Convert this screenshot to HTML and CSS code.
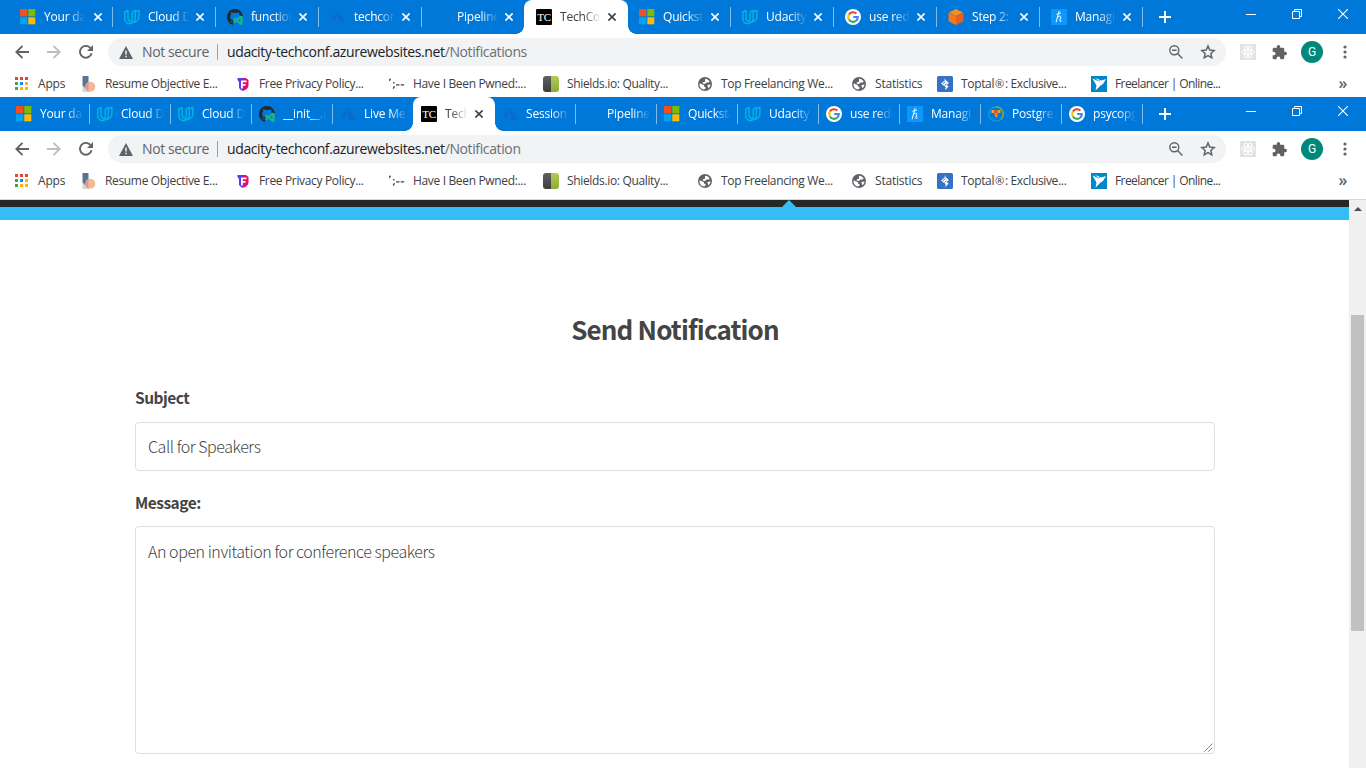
FILE: index.html
```html
<!DOCTYPE html>
<html lang="en">
<head>
<meta charset="utf-8">
<title>TechConf - Send Notification</title>
<link rel="stylesheet" href="styles.css">
</head>
<body>
<svg class="defs" aria-hidden="true">
  <symbol id="ms" viewBox="0 0 16 16"><path fill="#f25022" d="M0 0h7.300v7.300H0z"/><path fill="#7fba00" d="M8.300 0h7v7.300h-7z"/><path fill="#00a4ef" d="M0 8.300h7.300v7H0z"/><path fill="#ffb900" d="M8.300 8.300h7v7h-7z"/></symbol>
  <symbol id="ud" viewBox="0 0 16 16"><g fill="none" stroke="#02b3e4" stroke-width="1.500" stroke-linejoin="round"><path d="M4 1.400.8 3v6.300c0 3.400 2.300 5.400 4.600 5.400 1.300 0 2.200-.5 3.100-1.200C5.800 13 4 11.300 4 8.500z"/><path d="M8.200 3.200 11.200 1.500v8c0 2-1 3.400-2.700 4 3.700-.3 6.400-2.400 6.400-5.900V1.200L11.800 2.800M8.200 3.200v7.200c0 1-.6 1.700-1.800 1.700"/></g></symbol>
  <symbol id="gh" viewBox="0 0 16 16"><path fill="#24292e" d="M8 0C3.600 0 0 3.600 0 8s2.700 7.300 6 7.800v-2.500c-2 .4-2.700-.8-3.400-1.800l1.600.5c.6 1 1.400.9 2 .7.100-.5.300-.9.600-1.100C4.700 11.300 3.200 10.300 3.200 7.700c0-1 .4-1.700.9-2.300-.2-.6-.2-1.400.1-2.200.9 0 1.700.5 2.300.9 1-.3 2.300-.3 3.300 0 .7-.5 1.500-.9 2.200-.9.300.8.300 1.500.1 2.200.5.600.8 1.300.8 2.200h2.900C15.700 3.200 12.300 0 8 0z"/><path fill="#1bb58f" d="m13.500 6.500 2.200 1v7.700l-2.200.8-4-3.300-2 1.500-.8-.5V9l.8-.5 2 1.500zM13.300 9.500l-2.400 1.900 2.400 1.900zM8 10.500v1.800l.9-.9z"/></symbol>
  <symbol id="az" viewBox="0 0 16 16"><path fill="#0a6cc8" d="M8.300 2.500 4.500 5.800 1 12.500h3.200zM8.800 3.400 7 8.300l3.500 4.200-6.500 1h11.200z"/></symbol>
  <symbol id="go" viewBox="0 0 16 16"><circle cx="8" cy="8" r="8" fill="#fff"/><g fill="none" stroke-width="2.100"><path stroke="#ea4335" d="M3.900 5.500A4.800 4.800 0 0 1 11.400 4.600"/><path stroke="#fbbc05" d="M3.900 5.500a4.800 4.800 0 0 0 0 5"/><path stroke="#34a853" d="M3.900 10.500a4.800 4.800 0 0 0 7.200 1.200"/><path stroke="#4285f4" d="M8.200 8h4.600a4.700 4.700 0 0 1-1.700 3.700"/></g></symbol>
  <symbol id="cube" viewBox="0 0 16 16"><path fill="#fb8c1e" d="M8 0 15 3.500 8 7 1 3.500z"/><path fill="#f9771b" d="M.5 3.700 8 7.300V16L.5 12.300z"/><path fill="#e8601c" d="M15.500 3.700 8 7.300V16l7.500-3.700z"/></symbol>
  <symbol id="hh" viewBox="0 0 16 16"><path fill="#0c97fc" d="M0 0h16v16H0z"/><g fill="none" stroke="#fff" stroke-linecap="round"><path d="M8 2.500 5.200 12.800M6.300 8.700C7.500 7 9.900 6.300 9.700 8.200L8.900 11.700c-.2 1 .5 1.200 1.300.3M5.900 5.200l3.700-1.200"/></g></symbol>
  <symbol id="pg" viewBox="0 0 16 16"><circle cx="8" cy="8" r="7.200" fill="none" stroke="#1aa0c8" stroke-width="1.200"/><path d="M8 .8a7.200 7.200 0 0 1 5 12.400" fill="none" stroke="#75b843" stroke-width="1.300"/><path fill="#f7a51c" d="M3.500 4h3v3h-3zM9.500 4h3v3h-3z"/><path fill="#e94b35" d="M6.500 4h3v3h-3z"/><path fill="#f58220" d="M6.500 7h3v5l-3-2z"/></symbol>
  <symbol id="x" viewBox="0 0 8 8"><path d="m.4.400 7.200 7.200M7.600.4.400 7.600" stroke="currentColor" stroke-width="1.600" fill="none"/></symbol>
  <symbol id="plus" viewBox="0 0 12 12"><path d="M6 0v12M0 6h12" stroke="currentColor" stroke-width="2"/></symbol>
  <symbol id="min" viewBox="0 0 10 10"><path d="M0 5.500h10" stroke="#fff"/></symbol>
  <symbol id="restore" viewBox="0 0 10 10"><path d="M.5 2.500h7v7h-7zM2.500 2.500v-2h7v7h-2" fill="none" stroke="#fff"/></symbol>
  <symbol id="close" viewBox="0 0 10 10"><path d="m0 0 10 10M10 0 0 10" stroke="#fff" stroke-width="1.100"/></symbol>
  <symbol id="back" viewBox="0 0 14 14"><path d="M14 7H1.500M7.500.8 1.300 7l6.200 6.200" fill="none" stroke="currentColor" stroke-width="1.900"/></symbol>
  <symbol id="reload" viewBox="0 0 14 14"><path d="M12.600 8.300A5.900 5.900 0 1 1 11.300 2.900" fill="none" stroke="#5f6368" stroke-width="1.900"/><path fill="#5f6368" d="M14 0v6H8z"/></symbol>
  <symbol id="warn" viewBox="0 0 14 13"><path fill="#5f6368" d="M7 0 14 13H0z"/><path stroke="#f1f3f4" stroke-width="1.500" d="M7 4.500v4M7 9.800v1.500"/></symbol>
  <symbol id="lens" viewBox="0 0 14 14"><g fill="none" stroke="#5f6368" stroke-width="1.400"><circle cx="5.300" cy="5.300" r="4.500"/><path d="m8.600 8.600 4.800 4.800M3 5.300h4.600"/></g></symbol>
  <symbol id="star" viewBox="0 0 14 14"><path fill="none" stroke="#5f6368" stroke-width="1.300" d="m7 1.700 1.500 3.600 3.900.4-2.900 2.600.8 3.800L7 10.100l-3.300 2 .8-3.800-2.900-2.600 3.900-.4z"/></symbol>
  <symbol id="react" viewBox="0 0 16 16"><path fill="#e2e2e2" d="M0 0h16v16H0z"/><g fill="none" stroke="#fff"><ellipse cx="8" cy="8" rx="6.300" ry="2.500"/><ellipse cx="8" cy="8" rx="6.300" ry="2.500" transform="rotate(60 8 8)"/><ellipse cx="8" cy="8" rx="6.300" ry="2.500" transform="rotate(120 8 8)"/></g><circle cx="8" cy="8" r="1.200" fill="#fff"/></symbol>
  <symbol id="puzzle" viewBox="1 1 22 22"><path fill="#5f6368" d="M20.500 11H19V7a2 2 0 0 0-2-2h-4V3.500a2.500 2.500 0 0 0-5 0V5H4a2 2 0 0 0-2 2v3.800h1.500a2.700 2.700 0 0 1 0 5.400H2V20c0 1.100.9 2 2 2h3.800v-1.500a2.700 2.700 0 0 1 5.400 0V22H17a2 2 0 0 0 2-2v-4h1.500a2.500 2.500 0 0 0 0-5z"/></symbol>
  <symbol id="dots" viewBox="0 0 4 14"><g fill="#5f6368"><circle cx="2" cy="2" r="1.600"/><circle cx="2" cy="7" r="1.600"/><circle cx="2" cy="12" r="1.600"/></g></symbol>
  <symbol id="apps" viewBox="0 0 16 16"><path fill="#ea4335" d="M1 1h3v3H1zM6 1h3v3H6zM11 1h3v3h-3z"/><path fill="#34a853" d="M1 6h3v3H1zM1 11h3v3H1z"/><path fill="#1a84f0" d="M6 6h3v3H6z"/><path fill="#f9b30b" d="M11 6h3v3h-3zM6 11h3v3H6zM11 11h3v3h-3z"/></symbol>
  <symbol id="resume" viewBox="0 0 16 16"><path fill="#587592" d="M1.500 0h6v16l-6-6z"/><path fill="#d5d4d4" d="M1.500 9v7h6z"/><circle cx="9.300" cy="10.700" r="5" fill="#f3b799"/><path fill="#d99c88" d="M7.500 6v9.400C5.600 15 4.300 13 4.300 10.700S5.600 6.700 7.500 6z"/></symbol>
  <symbol id="fpp" viewBox="0 0 16 16"><path fill="#5d37f5" d="M2.500 2H9v12.500H6.500L4 12V6L2.500 4z"/><path fill="#e80e67" d="M8 2h3l2.500 2v5c0 3-2.500 5.500-6 5.500z"/><path fill="#fff" d="M6 4.500h5.500v1.800H7.800V8H10.500v1.700H7.800V12.500H6z"/></symbol>
  <symbol id="pwn" viewBox="0 0 18 16"><path d="M1.800 2.200q-1.500 1-.7 2.300M5.400 5.800v1.500M5.700 10.400q.3 1.400-1 2.800M8 9h3.800M13.200 9H17" fill="none" stroke="#3c4043" stroke-width="1.500"/></symbol>
  <symbol id="shield" viewBox="0 0 16 16"><defs><linearGradient id="sg" x2="0" y2="1"><stop stop-color="#606060"/><stop offset="1" stop-color="#3e3e3e"/></linearGradient><linearGradient id="sl" x2="0" y2="1"><stop stop-color="#b0ce55"/><stop offset="1" stop-color="#8aab35"/></linearGradient></defs><path fill="url(#sg)" d="M8 0H3Q0 0 0 3v10q0 3 3 3h5z"/><path fill="url(#sl)" d="M8 0h5q3 0 3 3v10q0 3-3 3H8z"/></symbol>
  <symbol id="globe" viewBox="0 0 16 16"><circle cx="8" cy="8" r="7" fill="#5f6368"/><path fill="#fff" d="M2.500 7.500C4 8 6 8.300 7 9.300l.2 1.500 1.300.2v1.500l-1.300 1C4.200 13.400 2.300 11 2.500 7.500zM8 2.700c2 0 3.800 1.100 4.700 2.800l-1 1H9.500L8 8 5.500 7.500 6 6.300l2-.5zM13.500 8.500c-.2 1.600-1 2.900-2.100 3.800L10.500 10V9z"/></symbol>
  <symbol id="toptal" viewBox="0 0 16 16"><rect width="16" height="16" rx="1.500" fill="#3372c4"/><path fill="#fff" d="m6.700 2 5.100 5-2 2 1.800 1.600-3.500 3.600.6-3L4.200 7.600l2.300-2 1.500-1.300z"/><path d="m6 7.700 2.200-1.900M7.600 9.700l2-2" stroke="#3372c4"/></symbol>
  <symbol id="fl" viewBox="0 0 16 16"><path fill="#0087ca" d="M0 0h16v16H0z"/><path fill="#fff" d="m1.500 2.500 6.500 3L9.500 4l.8.500L15 3l-3 5-3 2-4.500 4.500 1-5zM4 2l4 1.500.7.500L7.800 5z"/></symbol>
</svg>

<header class="browser">
  <div class="strip wide">
    <div class="tab"><svg class="ico"><use href="#ms"/></svg><span class="title">Your das</span><svg class="x"><use href="#x"/></svg></div>
    <div class="tab"><svg class="ico"><use href="#ud"/></svg><span class="title">Cloud D</span><svg class="x"><use href="#x"/></svg></div>
    <div class="tab"><svg class="ico"><use href="#gh"/></svg><span class="title">function</span><svg class="x"><use href="#x"/></svg></div>
    <div class="tab"><svg class="ico"><use href="#az"/></svg><span class="title">techcon</span><svg class="x"><use href="#x"/></svg></div>
    <div class="tab plain"><span class="ico"></span><span class="title">Pipeline</span><svg class="x"><use href="#x"/></svg></div>
    <div class="tab active"><span class="ico tc">TC</span><span class="title">TechCo</span><svg class="x"><use href="#x"/></svg></div>
    <div class="tab"><svg class="ico"><use href="#ms"/></svg><span class="title">Quickst</span><svg class="x"><use href="#x"/></svg></div>
    <div class="tab"><svg class="ico"><use href="#ud"/></svg><span class="title">Udacity</span><svg class="x"><use href="#x"/></svg></div>
    <div class="tab"><svg class="ico"><use href="#go"/></svg><span class="title">use red</span><svg class="x"><use href="#x"/></svg></div>
    <div class="tab"><svg class="ico"><use href="#cube"/></svg><span class="title">Step 2:</span><svg class="x"><use href="#x"/></svg></div>
    <div class="tab"><svg class="ico"><use href="#hh"/></svg><span class="title">Managi</span><svg class="x"><use href="#x"/></svg></div>
    <svg class="plus"><use href="#plus"/></svg>
    <div class="controls"><svg><use href="#min"/></svg><svg><use href="#restore"/></svg><svg><use href="#close"/></svg></div>
  </div>
  <div class="toolbar">
    <div class="nav"><svg><use href="#back"/></svg><svg class="forward"><use href="#back"/></svg><svg><use href="#reload"/></svg></div>
    <div class="omnibox"><svg class="warn"><use href="#warn"/></svg><span class="secure">Not secure</span><span class="url">udacity-techconf.azurewebsites.net<span class="path">/Notifications</span></span><svg class="lens"><use href="#lens"/></svg><svg class="star"><use href="#star"/></svg></div>
    <svg class="react"><use href="#react"/></svg><svg class="puzzle"><use href="#puzzle"/></svg><span class="avatar">G</span><svg class="dots"><use href="#dots"/></svg>
  </div>
  <div class="bookmarks">
    <span class="mark apps"><svg><use href="#apps"/></svg>Apps</span>
    <span class="mark"><svg><use href="#resume"/></svg>Resume Objective E...</span>
    <span class="mark fpp"><svg><use href="#fpp"/></svg>Free Privacy Policy...</span>
    <span class="mark"><svg><use href="#pwn"/></svg>Have I Been Pwned:...</span>
    <span class="mark"><svg><use href="#shield"/></svg>Shields.io: Quality...</span>
    <span class="mark"><svg><use href="#globe"/></svg>Top Freelancing We...</span>
    <span class="mark stats"><svg><use href="#globe"/></svg>Statistics</span>
    <span class="mark"><svg><use href="#toptal"/></svg>Toptal<span class="reg">®</span>: Exclusive...</span>
    <span class="mark last"><svg><use href="#fl"/></svg>Freelancer | Online...</span>
    <span class="more">»</span>
  </div>
</header>

<header class="browser second">
  <div class="strip narrow">
    <div class="tab"><svg class="ico"><use href="#ms"/></svg><span class="title">Your da</span></div>
    <div class="tab"><svg class="ico"><use href="#ud"/></svg><span class="title">Cloud D</span></div>
    <div class="tab"><svg class="ico"><use href="#ud"/></svg><span class="title">Cloud D</span></div>
    <div class="tab"><svg class="ico"><use href="#gh"/></svg><span class="title">__init__.p</span></div>
    <div class="tab plain"><svg class="ico"><use href="#az"/></svg><span class="title">Live Me</span></div>
    <div class="tab active"><span class="ico tc">TC</span><span class="title">Tech</span><svg class="x"><use href="#x"/></svg></div>
    <div class="tab"><svg class="ico"><use href="#az"/></svg><span class="title">Session</span></div>
    <div class="tab"><span class="ico"></span><span class="title">Pipeline</span></div>
    <div class="tab"><svg class="ico"><use href="#ms"/></svg><span class="title">Quicksta</span></div>
    <div class="tab"><svg class="ico"><use href="#ud"/></svg><span class="title">Udacity</span></div>
    <div class="tab"><svg class="ico"><use href="#go"/></svg><span class="title">use redi</span></div>
    <div class="tab"><svg class="ico"><use href="#hh"/></svg><span class="title">Managi</span></div>
    <div class="tab"><svg class="ico"><use href="#pg"/></svg><span class="title">Postgre</span></div>
    <div class="tab"><svg class="ico"><use href="#go"/></svg><span class="title">psycopg</span></div>
    <svg class="plus"><use href="#plus"/></svg>
    <div class="controls"><svg><use href="#min"/></svg><svg><use href="#restore"/></svg><svg><use href="#close"/></svg></div>
  </div>
  <div class="toolbar">
    <div class="nav"><svg><use href="#back"/></svg><svg class="forward"><use href="#back"/></svg><svg><use href="#reload"/></svg></div>
    <div class="omnibox"><svg class="warn"><use href="#warn"/></svg><span class="secure">Not secure</span><span class="url">udacity-techconf.azurewebsites.net<span class="path">/Notification</span></span><svg class="lens"><use href="#lens"/></svg><svg class="star"><use href="#star"/></svg></div>
    <svg class="react"><use href="#react"/></svg><svg class="puzzle"><use href="#puzzle"/></svg><span class="avatar">G</span><svg class="dots"><use href="#dots"/></svg>
  </div>
  <div class="bookmarks">
    <span class="mark apps"><svg><use href="#apps"/></svg>Apps</span>
    <span class="mark"><svg><use href="#resume"/></svg>Resume Objective E...</span>
    <span class="mark fpp"><svg><use href="#fpp"/></svg>Free Privacy Policy...</span>
    <span class="mark"><svg><use href="#pwn"/></svg>Have I Been Pwned:...</span>
    <span class="mark"><svg><use href="#shield"/></svg>Shields.io: Quality...</span>
    <span class="mark"><svg><use href="#globe"/></svg>Top Freelancing We...</span>
    <span class="mark stats"><svg><use href="#globe"/></svg>Statistics</span>
    <span class="mark"><svg><use href="#toptal"/></svg>Toptal<span class="reg">®</span>: Exclusive...</span>
    <span class="mark last"><svg><use href="#fl"/></svg>Freelancer | Online...</span>
    <span class="more">»</span>
  </div>
</header>

<div class="viewport">
  <main class="page">
    <div class="topbar"><svg class="notch" viewBox="0 0 14 7"><path fill="#36bcf7" d="M0 7 7 0l7 7z"/></svg></div>
    <div class="banner"></div>
    <form class="form">
      <h2>Send Notification</h2>
      <label>Subject</label>
      <div class="field">Call for Speakers</div>
      <label>Message:</label>
      <div class="field area">An open invitation for conference speakers<svg class="grip" viewBox="0 0 9 9"><path d="M.5 8.500l8-8M4.500 8.500l4-4" stroke="#444" stroke-dasharray="1.100 .3"/></svg></div>
    </form>
  </main>
  <div class="scroll"><svg viewBox="0 0 8 4"><path fill="#505050" d="M0 4 4 0l4 4z"/></svg><div class="thumb"></div></div>
</div>
</body>
</html>
```
FILE: styles.css
```css
* { box-sizing: border-box; }
html, body { height: 100%; overflow: hidden; }
body { margin: 0; width: 1366px; height: 768px; display: flex; flex-direction: column; background: #fff; font-family: "Open Sans", "Noto Sans", sans-serif; }
svg { display: block; flex: none; }
.defs { position: absolute; width: 0; height: 0; }

.browser { flex: none; height: 97px; background: #fff; }
.browser.second { height: 103px; border-bottom: 1px solid #d3dbd3; }
.strip { height: 34px; background: #0078d9; display: flex; padding-left: 10px; color: #fff; font-size: 12px; letter-spacing: -.2px; }
.tab { flex: none; height: 34px; display: flex; align-items: center; position: relative; }
.tab::after { content: ""; position: absolute; right: 0; top: 7px; width: 1px; height: 20px; background: #80bcec; }
.tab.active::after, .tab.plain::after { display: none; }
.wide .tab.plain:nth-child(5)::after { display: none; }
.ico { width: 16px; height: 16px; flex: none; }
.tc { background: #000; color: #fff; border-radius: 1px; font: 11px/16px "Liberation Serif", serif; text-align: center; letter-spacing: -.3px; }
.title { flex: none; overflow: hidden; white-space: nowrap; line-height: 20px; height: 20px; -webkit-mask-image: linear-gradient(to right, #000 calc(100% - 17px), transparent); mask-image: linear-gradient(to right, #000 calc(100% - 17px), transparent); }
.x { width: 8px; height: 8px; }
.wide .tab { width: 103px; padding-left: 11px; }
.wide .tab:first-child { padding-left: 10px; }
.wide .tab:first-child .title { margin-right: 9px; }
.wide .title { width: 41px; margin: 0 7px 0 8px; }
.narrow { padding-left: 9px; }
.narrow .tab { width: 81px; padding-left: 7px; }
.narrow .title { width: 43px; margin-left: 8px; }
.narrow .active .title { width: 23px; margin-right: 7px; }
.tab.active { background: #fff; color: #3c4043; border-radius: 8px 8px 0 0; }
.wide .tab.active { width: 104px; margin-left: -1px; padding-left: 12px; }
.narrow .tab.active { width: 82px; margin-left: -1px; padding-left: 8px; }
.tab.active::before { content: ""; position: absolute; left: -8px; right: -8px; bottom: 0; height: 8px; background: radial-gradient(circle at 0 0, transparent 7.5px, #fff 8px) left / 8px 8px no-repeat, radial-gradient(circle at 100% 0, transparent 7.5px, #fff 8px) right / 8px 8px no-repeat; }
.plus { width: 12px; height: 12px; margin: 11px 0 0 16px; }
.controls { margin-left: auto; display: flex; gap: 36px; padding: 9px 18px 0 0; }
.controls svg { width: 10px; height: 10px; }

.toolbar { height: 36px; display: flex; align-items: center; }
.nav { display: flex; gap: 18px; padding-left: 15px; width: 108px; color: #5f6368; }
.nav svg { width: 14px; height: 14px; }
.nav .forward { color: #bbbdbf; transform: scaleX(-1); }
.omnibox { width: 1118px; height: 28px; border-radius: 14px; background: #f1f3f4; display: flex; align-items: center; padding: 0 10px 0 11px; font-size: 14px; color: #202124; white-space: nowrap; }
.warn { width: 14px; height: 13px; }
.secure { color: #5f6368; width: 76px; height: 16px; line-height: 15px; margin-left: 9px; border-right: 1px solid #9aa0a6; letter-spacing: -.4px; }
.url { margin-left: 9px; letter-spacing: -.38px; line-height: 20px; }
.path { color: #6b6f74; }
.lens { width: 14px; height: 14px; margin-left: auto; margin-right: 17px; }
.star { width: 16px; height: 16px; }
.react { width: 16px; height: 16px; margin-left: 14px; }
.puzzle { width: 15px; height: 15px; margin-left: 16px; }
.avatar { width: 22px; height: 22px; margin-left: 14px; border-radius: 50%; background: #00897b; color: #fff; font: 12px/22px Roboto, sans-serif; text-align: center; }
.dots { width: 4px; height: 14px; margin-left: 20px; }

.bookmarks { height: 27px; display: flex; align-items: center; padding-left: 14px; font-size: 12px; color: #3c4043; letter-spacing: -.34px; }
.mark { width: 154px; flex: none; display: flex; align-items: center; white-space: nowrap; line-height: 20px; }
.mark svg { width: 16px; height: 16px; margin-right: 8px; }
.mark.apps { width: 67px; letter-spacing: -.2px; }
.mark.stats { width: 86px; letter-spacing: -.2px; }
.mark.last { letter-spacing: -.58px; }
.reg { font-size: 11px; margin: 0 1px; }
.more { margin-left: auto; padding-right: 19px; font-size: 16px; line-height: 20px; height: 22px; font-weight: 600; color: #5f6368; }

.viewport { flex: 1; display: flex; min-height: 0; }
.page { flex: 1; overflow: hidden; }
.topbar { height: 7px; background: #262827; }
.notch { width: 14px; height: 7px; margin-left: 782px; }
.banner { height: 13px; background: #36bcf7; }
.form { width: 1080px; margin: 0 auto 0 135px; font: 300 16px/24px "Noto Sans CJK JP", sans-serif; letter-spacing: -.44px; color: #444; }
.form h2 { margin: 89px 0 0; height: 41px; font-size: 26px; line-height: 40px; font-weight: 700; letter-spacing: -.85px; text-align: center; }
.form label { display: block; height: 24px; margin-top: 35px; font-size: 15.5px; font-weight: 700; letter-spacing: -.5px; }
.field { height: 49px; margin-top: 13px; border: 1px solid #dfdfdf; border-radius: 4px; padding: 11px 12px; position: relative; white-space: nowrap; }
.field + label { margin-top: 19px; }
.field.area { height: 228px; margin-top: 12px; padding-top: 12px; }
.grip { position: absolute; right: 1px; bottom: 1px; width: 9px; height: 9px; }
.scroll { width: 17px; background: #f0f0f0; display: flex; flex-direction: column; align-items: center; padding-top: 7px; }
.scroll svg { width: 8px; height: 4px; }
.thumb { width: 13px; height: 316px; margin-top: 104px; background: #c1c1c1; }
```
